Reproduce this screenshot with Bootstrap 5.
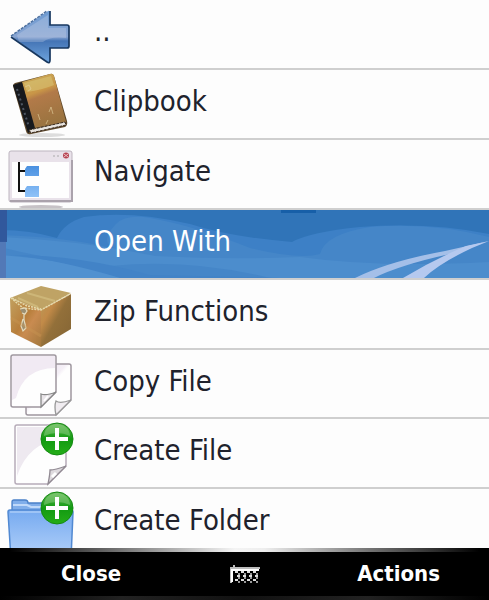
<!DOCTYPE html>
<html lang="en">
<head>
<meta charset="utf-8">
<meta name="viewport" content="width=device-width, initial-scale=1">
<title>File menu</title>
<link href="https://cdn.jsdelivr.net/npm/bootstrap@5.3.0/dist/css/bootstrap.min.css" rel="stylesheet">
<style>
  body { font-family: "DejaVu Sans Condensed", "Noto Sans", sans-serif; background: #fdfdfd; }
  .menu-rows { display: grid; grid-template-rows: repeat(7, 1fr) 59px; }
  .menu-rows > li { border-bottom: 2px solid #cfcfcf; min-height: 0; overflow: hidden; }
  .menu-rows > li:last-child { border-bottom: 0; }
  .menu-item { font-size: 29px; line-height: 36px; color: #20222c; padding: 0; gap: 14px; }
  .menu-item > svg { width: 80px; height: 70px; flex: none; }
  .menu-item > span { padding-top: 13px; }
  .menu-item.active { background: #3f83c6; color: #fff; }
  .sky { z-index: 0; }
  .menu-item > .label-front { z-index: 1; margin-left: 94px; }
  .softkeys { height: 53px; background: #000; }
  .softkeys::before, .softkeys::after { content: ""; height: 4px; background: linear-gradient(90deg, #000 2%, #777 25%, #f4f4f4 48%, #eee 54%, #777 75%, #000 98%); }
  .softkeys::after { background: linear-gradient(90deg, #000, #222 25%, #111 50%, #222 75%, #000); }
  .softkey { flex: 1 1 0; font-size: 22px; line-height: 28px; color: #fff; padding: 0 49px 0 61px; }
  .kbd-key { width: 32px; height: 20px; }
  .kbd-key svg { width: 32px; height: 20px; }
</style>
<script src="https://cdn.jsdelivr.net/npm/bootstrap@5.3.0/dist/js/bootstrap.bundle.min.js"></script>
</head>
<body>
<svg class="position-absolute" width="0" height="0" aria-hidden="true">
  <defs>
    <linearGradient id="arrowFill" x2="0" y2="1"><stop stop-color="#6d9bd2"/><stop offset=".5" stop-color="#89a5d2"/><stop offset=".58" stop-color="#4474b5"/><stop offset="1" stop-color="#6fa5de"/></linearGradient>
    <linearGradient id="bookFill" x2=".3" y2="1"><stop stop-color="#c9ac5c"/><stop offset=".4" stop-color="#c99647"/><stop offset=".5" stop-color="#b27a49"/><stop offset="1" stop-color="#9b7440"/></linearGradient>
    <linearGradient id="nodeFill" x2="0" y2="1"><stop stop-color="#4a90e0"/><stop offset="1" stop-color="#8fc2f8"/></linearGradient>
    <linearGradient id="boxLeft" x2="1" y2="1"><stop stop-color="#c2a160"/><stop offset=".45" stop-color="#b87f3c"/><stop offset=".6" stop-color="#c98b50"/><stop offset="1" stop-color="#a3783d"/></linearGradient>
    <linearGradient id="boxRight" x2="1" y2="1"><stop stop-color="#b99a58"/><stop offset=".3" stop-color="#c28a48"/><stop offset=".5" stop-color="#93703a"/><stop offset="1" stop-color="#836434"/></linearGradient>
    <linearGradient id="paperFill" x2="1" y2="1"><stop stop-color="#e9dfec"/><stop offset=".45" stop-color="#f5f0f7"/><stop offset=".5" stop-color="#fefefe"/></linearGradient>
    <linearGradient id="folderFill" x2="0" y2="1"><stop stop-color="#76aaf0"/><stop offset="1" stop-color="#b4d2fa"/></linearGradient>
    <linearGradient id="plusFill" x2="0" y2="1"><stop stop-color="#62b852"/><stop offset=".5" stop-color="#129a12"/><stop offset="1" stop-color="#25ad18"/></linearGradient>
    <symbol id="plus" viewBox="0 0 34 34"><circle cx="17" cy="17" r="16" fill="url(#plusFill)" stroke="#148a12"/><path d="M4 14a13 12 0 0 1 26 0Q17 8 4 14" fill="#a4d99a" opacity=".4"/><path d="M17 6v22M6 17h22" stroke="#fff" stroke-width="4"/></symbol>
  </defs>
</svg>

<main class="d-flex flex-column vh-100">
  <ul class="menu-rows list-unstyled mb-0 flex-grow-1 overflow-hidden">
    <li><button type="button" class="menu-item btn rounded-0 border-0 w-100 h-100 d-flex align-items-start text-start">
      <svg viewBox="0 0 80 70" aria-hidden="true"><path d="M11 36 48 11Q50 10 50 13V25H67Q69 25 69 27V46Q69 48 67 48H50V61Q50 64 47 62Z" fill="url(#arrowFill)"/><path d="M17 35 48 15V28H66V38Q50 36 43 42H19Z" fill="#d4dbed" opacity=".28"/><path d="M11 36 47 11" fill="none" stroke="#4b6f9f" stroke-width="1.5" stroke-dasharray="3 1"/><path d="M11 37 47 62Q50 64 50 60V48H67Q69 48 69 46V27Q69 25 67 25H50V11" fill="none" stroke="#17375f" stroke-width="1.7"/></svg>
      <span>..</span></button></li>
    <li><button type="button" class="menu-item btn rounded-0 border-0 w-100 h-100 d-flex align-items-start text-start">
      <svg viewBox="0 0 80 70" aria-hidden="true"><ellipse cx="42" cy="65" rx="23" ry="2" fill="#ddd"/><path d="M13 16Q13 14 15 13L50 4Q53 3 54 6L67 51Q68 55 65 57L31 64Q27 65 26 61Z" fill="#5e482b"/><path d="M22 12 50 4Q53 3 54 6L66 52 34 58Z" fill="url(#bookFill)"/><path d="M24 13 51 6 54 15Q42 20 27 22Z" fill="#ddd080" opacity=".45"/><path d="m13 15 9-3 13 46-7 5Z" fill="#17191d"/><path d="m17 19 12 38" stroke="#4e5662" stroke-width="2" stroke-dasharray="2 3"/><path d="m29 60 36-8 1 3-35 8Z" fill="#e8e4df" stroke="#3b2d20" stroke-dasharray="3 1"/><path d="m25 17 4-2 2 4-3 2M38 44l2 6M49 42l2-5 2 7M46 54l2-4" fill="none" stroke="#e6d3a1" opacity=".6"/></svg>
      <span>Clipbook</span></button></li>
    <li><button type="button" class="menu-item btn rounded-0 border-0 w-100 h-100 d-flex align-items-start text-start">
      <svg viewBox="0 0 80 70" aria-hidden="true"><ellipse cx="41" cy="67" rx="22" ry="2" fill="#c6c2c6"/><rect x="9" y="11" width="63" height="51" rx="2" fill="#e9e2ea" stroke="#bdb5bf"/><path d="M72 20v41H10" fill="none" stroke="#aaa2ac" stroke-width="2"/><rect x="12" y="22" width="57" height="36" fill="#fefefe"/><path d="M53 16h2m2 0h2" stroke="#aaa"/><circle cx="66" cy="15.500" r="3" fill="#b54250"/><path d="m64 14 4 3m0-3-4 3" stroke="#e9bcc0"/><path d="M19 22v29h7M19 31h7" fill="none" stroke="#111" stroke-width="2"/><path d="M27 26h12v10H25v-7zM27 46h12v11H25v-8z" fill="url(#nodeFill)"/></svg>
      <span>Navigate</span></button></li>
    <li><button type="button" class="menu-item active position-relative btn rounded-0 border-0 w-100 h-100 d-flex align-items-start text-start" aria-current="true">
      <svg class="sky position-absolute top-0 start-0 w-100 h-100" viewBox="0 0 489 68" preserveAspectRatio="none" aria-hidden="true">
        <path d="M0 0H489V68H0Z" fill="#3d80c6"/>
        <path d="M0 0H489V24Q430 12 360 17 310 22 292 32 230 27 190 14 130 0 84 7 64 13 57 28 30 20 0 20Z" fill="#3074b8"/>
        <path d="M116 14Q126 4 150 8 195 16 250 38 300 50 320 44 325 24 370 17 430 12 489 27V68H0V25Q70 27 120 40 96 35 116 14Z" fill="#4586c8"/>
        <path d="M0 27Q80 30 155 46 230 50 300 47 380 58 489 52V68H270Q190 48 110 56 60 52 0 37Z" fill="#4c8dcd"/>
        <path d="M0 45Q70 50 125 68H0Z" fill="#5191d0"/><path d="M12 45Q80 45 150 65L280 68H120Q60 50 12 45Z" fill="#4283c7"/>
        <path d="M281 0h35v3h-35z" fill="#175fa8"/><path d="M0 0h7v32H0z" fill="#31589c"/><path d="M0 32h6v36H0z" fill="#5279b7"/>
        <path d="M355 68Q390 51 445 41L485 32 450 44Q400 55 374 68Z" fill="#a4bfe8"/><path d="M403 68Q435 49 466 36L489 31 472 38Q440 53 424 68Z" fill="#b5c9ef"/>
      </svg>
      <span class="label-front">Open With</span></button></li>
    <li><button type="button" class="menu-item btn rounded-0 border-0 w-100 h-100 d-flex align-items-start text-start">
      <svg viewBox="0 0 80 70" aria-hidden="true"><path d="M10 18 41 30V67L11 52Z" fill="url(#boxLeft)"/><path d="M41 30 71 14V49L41 67Z" fill="url(#boxRight)"/><path d="M10 18 41 6 71 13 41 30Z" fill="#bfa365"/><path d="m27 13 28 8M18 18l20 9" stroke="#dcc98c" stroke-width="2" opacity=".5"/><path d="m11 18 12 10 18 2 29-16M12 18l15 8 14 3" fill="none" stroke="#e5d9a9" stroke-width="1.500" stroke-dasharray="2 1"/><path d="m20 29 5-1 2 3-2 3-3-1M24 34v6l2 8-3 3-2-5 2-7" fill="#9b8f71" stroke="#e4dbbd" stroke-width="1.200"/><path d="m11 38 30 18" stroke="#c99653" stroke-width="3" opacity=".4"/></svg>
      <span>Zip Functions</span></button></li>
    <li><button type="button" class="menu-item btn rounded-0 border-0 w-100 h-100 d-flex align-items-start text-start">
      <svg viewBox="0 0 80 70" aria-hidden="true"><path d="M28 14H69Q71 14 71 16V50L56 65H28Q26 65 26 63V16Q26 14 28 14Z" fill="url(#paperFill)" stroke="#9e979f" stroke-width="1.500"/><path d="M56 65Q54 56 56 51 60 54 71 50Z" fill="#f0ecf0" stroke="#999" stroke-width="1.300"/><path d="M13 5H54Q56 5 56 7V42L41 57H13Q11 57 11 55V7Q11 5 13 5Z" fill="#fefefe" stroke="#9e979f" stroke-width="1.500"/><path d="M12 6H55V18Q24 18 16 48L12 50Z" fill="#f1eaf3"/><path d="M41 57V44Q46 46 56 42Z" fill="#e8e4e8" stroke="#888" stroke-width="1.300"/><path d="m44 51 4-5" stroke="#fff" stroke-width="2"/></svg>
      <span>Copy File</span></button></li>
    <li><button type="button" class="menu-item btn rounded-0 border-0 w-100 h-100 d-flex align-items-start text-start">
      <svg viewBox="0 0 80 70" aria-hidden="true"><path d="M17 6H64Q66 6 66 8V47L48 65H17Q15 65 15 63V8Q15 6 17 6Z" fill="#fefefe" stroke="#b7acb9" stroke-width="1.500"/><path d="M17 8H60V20Q28 24 17 57Z" fill="#eee9f0"/><path d="M48 65Q50 55 50 51 55 51 66 47Z" fill="#dedade" stroke="#918a93" stroke-width="1.300"/><path d="m52 58 4-4" stroke="#fff" stroke-width="3"/><use href="#plus" x="40" y="3" width="34" height="34"/></svg>
      <span>Create File</span></button></li>
    <li><button type="button" class="menu-item btn rounded-0 border-0 w-100 h-100 d-flex align-items-start text-start">
      <svg viewBox="0 0 80 70" aria-hidden="true"><path d="M12 30V13Q12 11 14 11H25Q28 11 28 14H66Q69 14 69 17V31" fill="#80aeea" stroke="#4a80c7" stroke-width="1.300"/><path d="m13 16 14 0 4 2H66" fill="none" stroke="#c0d9f9" stroke-width="2"/><path d="M8 23Q8 21 10 21H71Q73 21 73 23L71 70H11Z" fill="url(#folderFill)" stroke="#5189d2" stroke-width="1.500"/><path d="M10 23H70" stroke="#c3dbfb"/><use href="#plus" x="40" y="2" width="34" height="34"/></svg>
      <span>Create Folder</span></button></li>
  </ul>

  <footer class="softkeys d-flex flex-column justify-content-between">
    <nav class="d-flex align-items-center justify-content-between" aria-label="Soft keys">
      <button type="button" class="softkey btn border-0 fw-bold text-start">Close</button>
      <button type="button" class="kbd-key btn border-0 p-0 d-flex" aria-label="Keyboard">
        <svg viewBox="0 0 32 20" aria-hidden="true"><path d="M5 1v4M2 19V4H31" fill="none" stroke="#bbb" stroke-width="2"/><path d="M3 18V6H30" fill="none" stroke="#fff" stroke-width="2"/><path d="M6 8h24M8 12h22M6 16h24" stroke="#ddd" stroke-width="2" stroke-dasharray="3 3"/><path d="M6 10h24M6 14h24M6 18h24" stroke="#999" stroke-width="2" stroke-dasharray="2 4" stroke-dashoffset="3"/></svg>
      </button>
      <button type="button" class="softkey btn border-0 fw-bold text-end">Actions</button>
    </nav>
  </footer>
</main>
</body>
</html>
